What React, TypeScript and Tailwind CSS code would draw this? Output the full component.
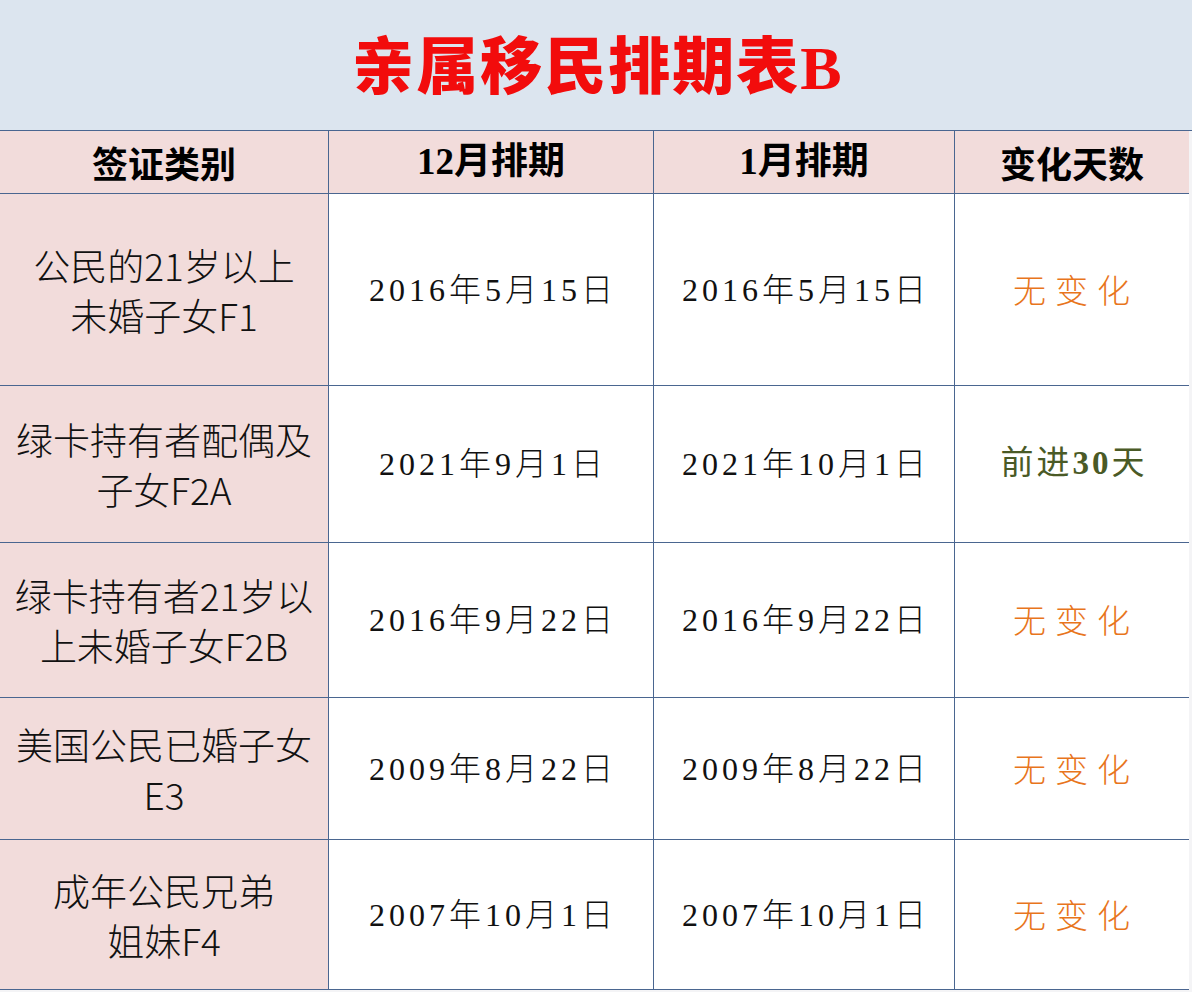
import React from "react";

type Row = {
  label: string[];
  dec: string;
  jan: string;
  change: string;
  moved?: boolean;
  h: string;
};

const rows: Row[] = [
  { label: ["公民的21岁以上", "未婚子女F1"], dec: "2016年5月15日", jan: "2016年5月15日", change: "无变化", h: "h-[192px]" },
  { label: ["绿卡持有者配偶及", "子女F2A"], dec: "2021年9月1日", jan: "2021年10月1日", change: "前进30天", moved: true, h: "h-[157px]" },
  { label: ["绿卡持有者21岁以", "上未婚子女F2B"], dec: "2016年9月22日", jan: "2016年9月22日", change: "无变化", h: "h-[155px]" },
  { label: ["美国公民已婚子女", "E3"], dec: "2009年8月22日", jan: "2009年8月22日", change: "无变化", h: "h-[142px]" },
  { label: ["成年公民兄弟", "姐妹F4"], dec: "2007年10月1日", jan: "2007年10月1日", change: "无变化", h: "h-[150px]" },
];

const sans = "font-['Noto_Sans_CJK_SC',sans-serif]";
const serif = "font-['Liberation_Serif','Noto_Sans_CJK_SC',serif]";

const App: React.FC = () => {
  return (
    <div className="w-[1192px] h-[992px] bg-[#f4f4f6] overflow-hidden">
      <div className="h-[131px] bg-[#dce5ef] border-b border-[#4a6690] flex items-center justify-center">
        <h1 className={`${sans} text-[62px] font-black text-[#f20c0c] tracking-[2px] leading-none pl-1`}>
          亲属移民排期表<span className="font-['Liberation_Serif',serif]">B</span>
        </h1>
      </div>
      <div className="grid grid-cols-[329px_325px_301px_234px] w-[1189px] border-r border-[#4a6690]">
        <div className={`h-[63px] bg-[#f2dcdb] border-r border-b border-[#4a6690] flex items-center justify-center ${sans} text-[36px] font-bold text-black`}>
          签证类别
        </div>
        <div className={`h-[63px] bg-[#f2dcdb] border-r border-b border-[#4a6690] flex items-center justify-center ${serif} text-[37px] font-bold text-black`}>
          12月排期
        </div>
        <div className={`h-[63px] bg-[#f2dcdb] border-r border-b border-[#4a6690] flex items-center justify-center ${serif} text-[37px] font-bold text-black`}>
          1月排期
        </div>
        <div className={`h-[63px] bg-[#f2dcdb] border-b border-[#4a6690] flex items-center justify-center ${sans} text-[36px] font-bold text-black`}>
          变化天数
        </div>
        {rows.map((r, i) => (
          <React.Fragment key={i}>
            <div className={`${r.h} bg-[#f2dcdb] border-r border-b border-[#4a6690] flex flex-col items-center justify-center ${sans} text-[37px] font-light leading-[50px] text-[#111]`}>
              {r.label.map((l) => (
                <span key={l}>{l}</span>
              ))}
            </div>
            <div className={`${r.h} bg-white border-r border-b border-[#4a6690] flex items-center justify-center ${serif} text-[32px] tracking-[4px] font-light text-[#111] pl-1`}>
              {r.dec}
            </div>
            <div className={`${r.h} bg-white border-r border-b border-[#4a6690] flex items-center justify-center ${serif} text-[32px] tracking-[4px] font-light text-[#111] pl-1`}>
              {r.jan}
            </div>
            <div className={`${r.h} bg-white border-b border-[#4a6690] flex items-center justify-center`}>
              {r.moved ? (
                <span className={`${serif} text-[33px] tracking-[3px] text-[#4a5a26] font-normal pl-1`}>
                  前进<span className="font-bold">30</span>天
                </span>
              ) : (
                <span className={`${sans} text-[33px] tracking-[9px] text-[#e8751c] font-light pl-2`}>{r.change}</span>
              )}
            </div>
          </React.Fragment>
        ))}
      </div>
    </div>
  );
};

export default App;
